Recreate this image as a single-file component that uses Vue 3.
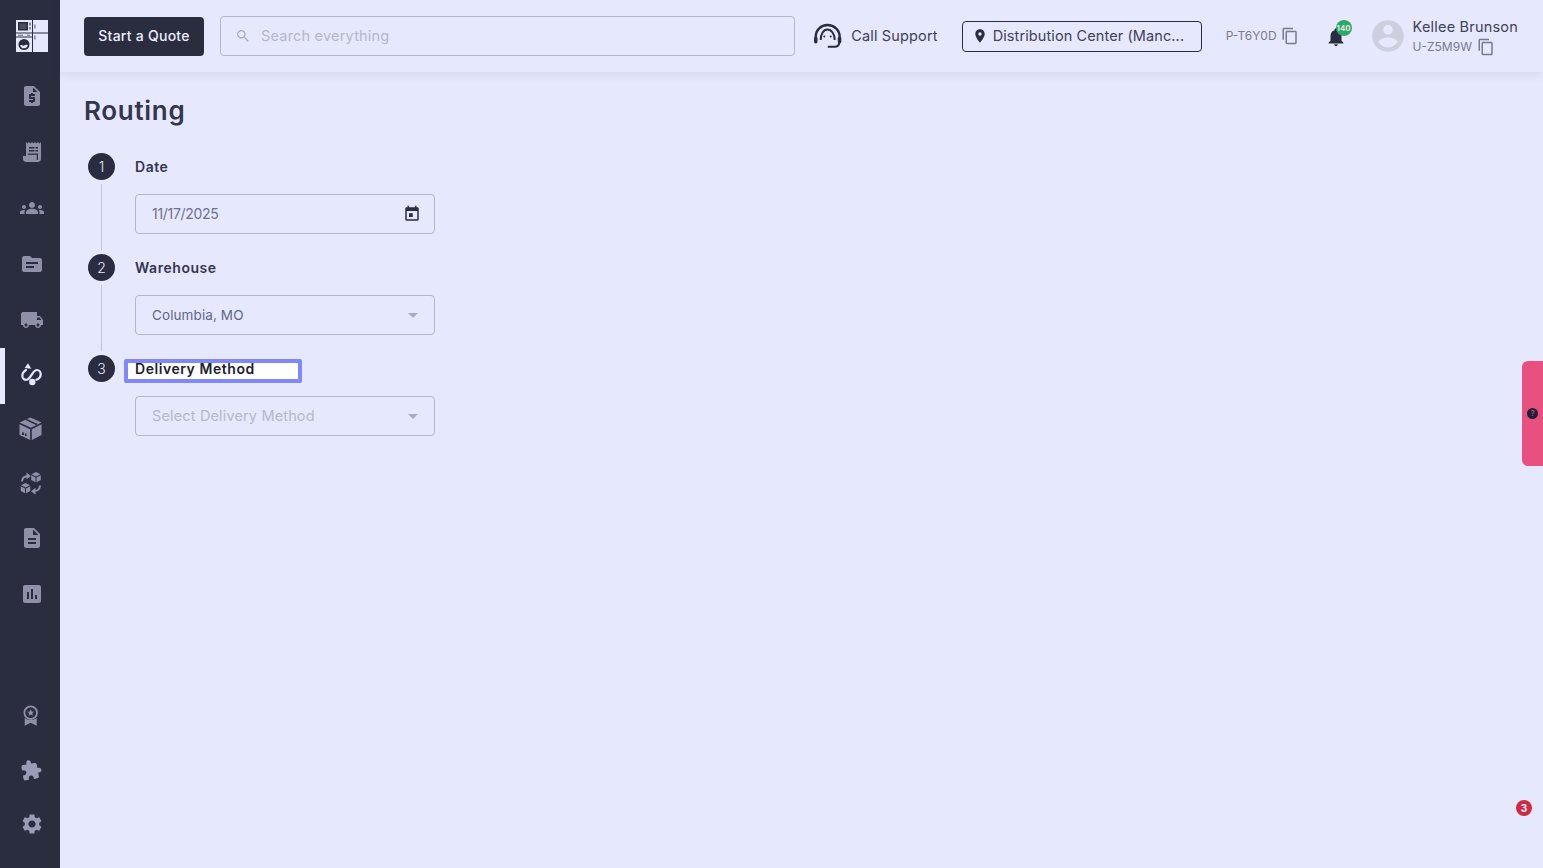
<script setup>
const topNav = [
  { d: 'M14 2H6c-1.1 0-1.99.9-1.99 2L4 20c0 1.1.89 2 1.99 2H18c1.1 0 2-.9 2-2V8l-6-6zm1 10h-4v1h3c.55 0 1 .45 1 1v3c0 .55-.45 1-1 1h-1v1h-2v-1H9v-2h4v-1h-3c-.55 0-1-.45-1-1v-3c0-.55.45-1 1-1h1V9h2v1h2v2zm-2-4V3.5L17.5 8H13z', h: 56 },
  { kind: 'receipt', h: 56 },
  { d: 'M12 12.75c1.63 0 3.07.39 4.24.9 1.08.48 1.76 1.56 1.76 2.73V18H6v-1.61c0-1.18.68-2.26 1.76-2.73 1.17-.52 2.61-.91 4.24-.91zM4 13c1.1 0 2-.9 2-2s-.9-2-2-2-2 .9-2 2 .9 2 2 2zm1.13 1.1c-.37-.06-.74-.1-1.13-.1-.99 0-1.93.21-2.78.58C.48 14.9 0 15.62 0 16.43V18h4.5v-1.61c0-.83.23-1.61.63-2.29zM20 13c1.1 0 2-.9 2-2s-.9-2-2-2-2 .9-2 2 .9 2 2 2zm4 3.43c0-.81-.48-1.53-1.22-1.85-.85-.37-1.79-.58-2.78-.58-.39 0-.76.04-1.13.1.4.68.63 1.46.63 2.29V18H24v-1.57zM12 6c1.66 0 3 1.34 3 3s-1.34 3-3 3-3-1.34-3-3 1.34-3 3-3z', h: 56 },
  { d: 'M20 6h-8l-2-2H4c-1.1 0-1.99.9-1.99 2L2 18c0 1.1.9 2 2 2h16c1.1 0 2-.9 2-2V8c0-1.1-.9-2-2-2zm-6 10H6v-2h8v2zm4-4H6v-2h12v2z', h: 56 },
  { d: 'M20 8h-3V4H3c-1.1 0-2 .9-2 2v11h2c0 1.66 1.34 3 3 3s3-1.34 3-3h6c0 1.66 1.34 3 3 3s3-1.34 3-3h2v-5l-3-4zM6 18.5c-.83 0-1.5-.67-1.5-1.5s.67-1.5 1.5-1.5 1.5.67 1.5 1.5-.67 1.5-1.5 1.5zm13.5-9l1.96 2.5H17V9.5h2.5zm-1.5 9c-.83 0-1.5-.67-1.5-1.5s.67-1.5 1.5-1.5 1.5.67 1.5 1.5-.67 1.5-1.5 1.5z', h: 56 },
  { kind: 'route', active: true, h: 56 },
  { kind: 'box', h: 54 },
  { kind: 'sync', h: 54 },
  { d: 'M14 2H6c-1.1 0-1.99.9-1.99 2L4 20c0 1.1.89 2 1.99 2H18c1.1 0 2-.9 2-2V8l-6-6zm2 16H8v-2h8v2zm0-4H8v-2h8v2zm-3-5V3.5L18.5 9H13z', h: 52 },
  { d: 'M19 3H5c-1.1 0-2 .9-2 2v14c0 1.1.9 2 2 2h14c1.1 0 2-.9 2-2V5c0-1.1-.9-2-2-2zM9 17H7v-7h2v7zm4 0h-2V7h2v10zm4 0h-2v-4h2v4z', h: 60 }
]
const copyPath = 'M16 1H4c-1.1 0-2 .9-2 2v14h2V3h12V1zm3 4H8c-1.1 0-2 .9-2 2v14c0 1.1.9 2 2 2h11c1.1 0 2-.9 2-2V7c0-1.1-.9-2-2-2zm0 16H8V7h11v14z'
</script>

<template>
  <div class="app">
    <aside class="sidebar">
      <div class="logo">
        <svg width="32" height="32" viewBox="0 0 32 32">
          <rect x="0" y="0" width="16" height="12.500" fill="#e6e8fd" />
          <rect x="2" y="2" width="10" height="8.500" fill="#2a2c40" />
          <rect x="3.500" y="3.500" width="7" height="5.500" fill="#4a4c62" />
          <rect x="13.500" y="2.500" width="1" height="3" fill="#2a2c40" />
          <rect x="13.500" y="7" width="1" height="2.500" fill="#2a2c40" />
          <rect x="17" y="0" width="15" height="12.500" fill="#e6e8fd" />
          <rect x="18.300" y="4.500" width="1.200" height="4" fill="#6a6c82" />
          <rect x="17" y="13.500" width="15" height="18.500" fill="#e6e8fd" />
          <rect x="18.300" y="15.500" width="1.200" height="4" fill="#6a6c82" />
          <rect x="0" y="13.500" width="16" height="18.500" fill="#e6e8fd" />
          <rect x="0" y="16.500" width="16" height="1" fill="#2a2c40" />
          <rect x="2" y="14.700" width="5" height="1" fill="#6a6c82" />
          <rect x="11" y="14.700" width="3" height="1" fill="#6a6c82" />
          <circle cx="8" cy="24.500" r="5.500" fill="#2a2c40" />
          <path d="M4.200 25.500c1.500-1.500 2.500.8 3.800 0s2.500-1 3.800-.5a3.900 3.900 0 0 1-7.600.5z" fill="#e6e8fd" />
        </svg>
      </div>
      <nav class="nav">
        <div
          v-for="(item, i) in topNav"
          :key="i"
          class="nav-item"
          :class="{ active: item.active }"
          :style="{ height: item.h + 'px' }"
        >
          <svg v-if="item.d" width="24" height="24" viewBox="0 0 24 24"><path :d="item.d" /></svg>
          <svg v-else-if="item.kind === 'receipt'" width="24" height="24" viewBox="0 0 24 24">
            <path d="M19.500 3.500 18 2l-1.500 1.500L15 2l-1.500 1.500L12 2l-1.500 1.500L9 2 7.500 3.500 6 2v14H3v3c0 1.660 1.340 3 3 3h12c1.660 0 3-1.340 3-3V2l-1.500 1.500z" />
            <path class="cut" d="M9 7h5.500v1.500H9zM15.500 7H18v1.500h-2.500zM9 10h5.500v1.500H9zM15.500 10H18v1.500h-2.500zM8 13.500h10v1.200H8zM16.800 14.700h1.200V20h-1.200z" />
          </svg>
          <svg v-else-if="item.kind === 'route'" class="route" width="24" height="24" viewBox="0 0 24 24">
            <path class="route-line" d="M6 6C3.500 7.500 2.300 9.500 2.300 12c0 3 2.700 4.500 5.200 3.500 2.500-1 3.500-4 5-6 1.300-2 2.500-3.500 4.500-3.500s3.700 2 3.700 4.500c0 2.500-2.200 4.800-4.200 5.200" />
            <path class="route-fill" d="M8-.7 11.300 4.700 4.700 4z" />
            <circle class="route-fill" cx="12.300" cy="18" r="3.200" />
          </svg>
          <svg v-else-if="item.kind === 'box'" class="custom" width="24" height="24" viewBox="0 0 24 24">
            <path d="M10.500-1.500 21.500 3.500 11 8.700-.5 3.500z" />
            <path class="cut" d="M5 .8l11 5.100 1.800-.9L6.800 0z" />
            <path d="M-.5 5.200 10.200 10.200V21L-.5 16z" />
            <path d="M11.800 10.200 21.500 5.200V16L11.800 21z" />
            <path class="cut" d="M2 13.500h2v2.500H2zM5 14.500h1.500v2.500H5z" />
          </svg>
          <svg v-else-if="item.kind === 'sync'" class="custom" width="24" height="24" viewBox="0 0 24 24">
            <g transform="translate(16 4)">
              <path d="M0-5 4.500-2.700 0-.4-4.500-2.700z" />
              <path d="M-4.800-1.700-.5.500V5.200L-4.800 3z" />
              <path d="M.5.500 4.800-1.700V3L.5 5.200z" />
            </g>
            <g transform="translate(5.500 15)">
              <path d="M0-5 4.500-2.700 0-.4-4.500-2.700z" />
              <path d="M-4.800-1.700-.5.500V5.200L-4.800 3z" />
              <path d="M.5.500 4.800-1.700V3L.5 5.200z" />
            </g>
            <path class="arrow" d="M2 8.500C2.200 5.500 4 3.500 7 3.200" />
            <path d="M6.500-.5 11 3 6.500 6.300z" />
            <path class="arrow" d="M20 12.500c-.2 3-2 5.200-5 5.500" />
            <path d="M15.500 14.800 11 18.200l4.500 3.500z" />
          </svg>
        </div>
      </nav>
      <div class="nav-bottom">
        <div class="nav-item bottom">
          <svg class="custom" width="24" height="24" viewBox="0 0 24 24">
            <g transform="translate(.7 1.200)">
              <circle class="ring" cx="10" cy="9.500" r="6.300" />
              <path d="M10 6l1 2.300 2.400.2-1.800 1.600.6 2.400L10 11.200l-2.200 1.300.6-2.400-1.800-1.600 2.400-.2z" />
              <path d="M4 14.500c1.500 1.500 3.800 2.200 6 2.200s4.500-.7 6-2.200V22.500l-6-3-6 3z" />
            </g>
          </svg>
        </div>
        <div class="nav-item bottom">
          <svg class="puzzle" width="22" height="22" viewBox="0 0 24 24">
            <path transform="rotate(-10 12 12) translate(-1 1)" d="M20.500 11H19V7c0-1.100-.9-2-2-2h-4V3.500C13 2.120 11.880 1 10.500 1S8 2.120 8 3.500V5H4c-1.100 0-1.990.9-1.990 2v3.800H3.500c1.490 0 2.700 1.210 2.700 2.700s-1.210 2.700-2.700 2.700H2V20c0 1.100.9 2 2 2h3.800v-1.500c0-1.490 1.210-2.700 2.700-2.700 1.490 0 2.700 1.210 2.700 2.700V22H17c1.100 0 2-.9 2-2v-4h1.500c1.380 0 2.500-1.120 2.500-2.500S21.880 11 20.500 11z" />
          </svg>
        </div>
        <div class="nav-item bottom">
          <svg class="puzzle" width="24" height="24" viewBox="0 0 24 24">
            <path d="M19.140 12.940c.04-.3.06-.61.06-.94 0-.32-.02-.64-.07-.94l2.030-1.580c.18-.14.23-.41.12-.61l-1.920-3.320c-.12-.22-.37-.29-.59-.22l-2.390.96c-.5-.38-1.030-.7-1.620-.94l-.36-2.540c-.04-.24-.24-.41-.48-.41h-3.840c-.24 0-.43.17-.47.41l-.36 2.540c-.59.24-1.130.57-1.620.94l-2.390-.96c-.22-.08-.47 0-.59.22L2.740 8.870c-.12.21-.08.47.12.61l2.030 1.580c-.05.3-.09.63-.09.94s.02.64.07.94l-2.030 1.580c-.18.14-.23.41-.12.61l1.920 3.320c.12.22.37.29.59.22l2.390-.96c.5.38 1.030.7 1.620.94l.36 2.540c.05.24.24.41.48.41h3.840c.24 0 .44-.17.47-.41l.36-2.540c.59-.24 1.130-.56 1.620-.94l2.390.96c.22.08.47 0 .59-.22l1.920-3.320c.12-.22.07-.47-.12-.61l-2.010-1.580zM12 15.600c-1.980 0-3.600-1.620-3.600-3.600s1.620-3.600 3.600-3.600 3.600 1.620 3.600 3.600-1.620 3.600-3.600 3.600z" />
          </svg>
        </div>
      </div>
    </aside>

    <div class="main">
      <header class="header">
        <button class="quote-btn">Start a Quote</button>
        <div class="search">
          <svg class="search-icon" width="16" height="16" viewBox="0 0 24 24">
            <path d="M15.500 14h-.79l-.28-.27C15.410 12.590 16 11.110 16 9.500 16 5.910 13.090 3 9.500 3S3 5.910 3 9.500 5.910 16 9.500 16c1.610 0 3.090-.59 4.230-1.570l.27.28v.79l5 4.990L20.490 19l-4.990-5zm-6 0C7.010 14 5 11.990 5 9.500S7.010 5 9.500 5 14 7.010 14 9.500 11.990 14 9.500 14z" />
          </svg>
          <span class="lift">Search everything</span>
        </div>
        <div class="support">
          <svg width="28" height="26" viewBox="0 0 28 26" fill="none" stroke="#2a2c40">
            <path d="M1.700 14C1.700 7 7 2 13.500 2S25.700 7 25.700 14" stroke-width="2.400" />
            <path d="M6.700 17C6.700 11 9.500 6.500 13.500 6.500S20.700 11 20.700 17" stroke-width="2" />
            <circle cx="10.300" cy="13.500" r="1" fill="#2a2c40" stroke="none" />
            <circle cx="16.700" cy="13.500" r="1" fill="#2a2c40" stroke="none" />
            <rect x="0" y="13.500" width="3.500" height="7" rx="1.700" fill="#2a2c40" stroke="none" />
            <rect x="23.800" y="13.500" width="3.500" height="7" rx="1.700" fill="#2a2c40" stroke="none" />
            <path d="M25.300 20c-.5 2.500-2.300 3.700-4.500 3.700h-7" stroke-width="2" />
          </svg>
          <span class="lift">Call Support</span>
        </div>
        <div class="location">
          <svg width="16" height="16" viewBox="0 0 24 24">
            <path d="M12 2C8.130 2 5 5.130 5 9c0 5.250 7 13 7 13s7-7.750 7-13c0-3.870-3.130-7-7-7zm0 9.500c-1.380 0-2.500-1.120-2.500-2.500s1.120-2.500 2.500-2.500 2.500 1.120 2.500 2.500-1.120 2.500-2.500 2.500z" />
          </svg>
          <span class="lift">Distribution Center (Manc...</span>
        </div>
        <div class="pid">
          <span class="lift">P-T6Y0D</span>
          <svg class="copy" width="18" height="18" viewBox="0 0 24 24"><path :d="copyPath" /></svg>
        </div>
        <div class="bell">
          <svg width="22" height="22" viewBox="0 0 24 24">
            <path d="M12 22c1.100 0 2-.9 2-2h-4c0 1.100.89 2 2 2zm6-6v-5c0-3.070-1.640-5.640-4.500-6.320V4c0-.83-.67-1.500-1.500-1.500s-1.500.67-1.500 1.500v.68C7.630 5.360 6 7.920 6 11v5l-2 2v1h16v-1l-2-2z" />
          </svg>
          <span class="bell-badge">140</span>
        </div>
        <div class="user">
          <svg width="38" height="38" viewBox="0 0 24 24">
            <path d="M12 2C6.480 2 2 6.480 2 12s4.480 10 10 10 10-4.480 10-10S17.520 2 12 2zm0 3c1.660 0 3 1.340 3 3s-1.340 3-3 3-3-1.340-3-3 1.340-3 3-3zm0 14.200c-2.500 0-4.710-1.280-6-3.220.03-1.990 4-3.080 6-3.080 1.990 0 5.970 1.090 6 3.080-1.290 1.940-3.500 3.220-6 3.220z" />
          </svg>
          <div class="user-text">
            <div class="user-name">Kellee Brunson</div>
            <div class="user-id">
              <span>U-Z5M9W</span>
              <svg class="copy" width="18" height="18" viewBox="0 0 24 24"><path :d="copyPath" /></svg>
            </div>
          </div>
        </div>
      </header>

      <main class="content">
        <h1 class="title">Routing</h1>
        <section class="stepper">
          <div class="step">
            <div class="step-head">
              <span class="num">1</span>
              <span class="label">Date</span>
            </div>
            <div class="step-body line">
              <div class="field">
                <span class="date-value lift">11/17/2025</span>
                <svg width="18" height="18" viewBox="0 0 24 24">
                  <path d="M16 1v2H8V1H6v2H5c-1.110 0-1.990.9-1.990 2L3 19c0 1.100.89 2 2 2h14c1.100 0 2-.9 2-2V5c0-1.100-.9-2-2-2h-1V1h-2zm3 18H5V8h14v11z" />
                  <rect x="8" y="11" width="5" height="5" />
                </svg>
              </div>
            </div>
          </div>
          <div class="step">
            <div class="step-head">
              <span class="num">2</span>
              <span class="label">Warehouse</span>
            </div>
            <div class="step-body line">
              <div class="field">
                <span class="select-value">Columbia, MO</span>
                <span class="caret"></span>
              </div>
            </div>
          </div>
          <div class="step">
            <div class="step-head">
              <span class="num">3</span>
              <span class="label focused">Delivery Method</span>
            </div>
            <div class="step-body">
              <div class="field">
                <span class="placeholder lift">Select Delivery Method</span>
                <span class="caret"></span>
              </div>
            </div>
          </div>
        </section>
      </main>
    </div>

    <div class="side-tab"><span class="side-dot">?</span></div>
    <span class="red-badge">3</span>
  </div>
</template>

<style>
html, body { margin: 0; background: #e6e8fd; }
</style>

<style scoped>
.app {
  display: flex;
  height: 868px;
  overflow: hidden;
  position: relative;
  background: #e6e8fd;
  font-family: Inter, "Noto Sans", sans-serif;
  color: #2a2c40;
}
.lift { padding-bottom: 2px; }
.sidebar {
  width: 60px;
  flex: none;
  background: #2a2c40;
  display: flex;
  flex-direction: column;
  padding-bottom: 16.500px;
  box-sizing: border-box;
}
.logo {
  height: 68px;
  padding: 20px 0 0 16px;
  box-sizing: border-box;
}
.logo svg { display: block; }
.nav { display: flex; flex-direction: column; }
.nav-bottom { margin-top: auto; display: flex; flex-direction: column; }
.nav-item {
  display: flex;
  align-items: center;
  justify-content: center;
  padding-left: 4px;
  box-sizing: border-box;
  position: relative;
}
.nav-item.bottom { height: 55px; }
.nav-item svg { fill: #8f90a8; overflow: visible; display: block; }
.nav-item svg.puzzle { fill: #9a9cb6; }
.nav-item .cut { fill: #2a2c40; }
.nav-item.active::before {
  content: "";
  position: absolute;
  left: 0;
  top: 0;
  bottom: 0;
  width: 5px;
  background: #e6e8fd;
}
.route .route-line { fill: none; stroke: #e6e8fd; stroke-width: 2.2; stroke-linecap: round; }
.route .route-fill { fill: #e6e8fd; }
.custom .ring { fill: none; stroke: #8f90a8; stroke-width: 1.8; }
.custom .arrow { fill: none; stroke: #8f90a8; stroke-width: 2; }

.main { flex: 1; min-width: 0; display: flex; flex-direction: column; }
.header {
  height: 72px;
  flex: none;
  display: flex;
  align-items: center;
  padding: 0 25px 0 24px;
  box-sizing: border-box;
  box-shadow: 0 2px 10px rgba(42, 44, 64, 0.09);
  background: #e6e8fd;
}
.quote-btn {
  width: 120px;
  height: 39px;
  border: 0;
  border-radius: 4px;
  background: #2a2c40;
  color: #eceefd;
  font: 500 14px Inter, sans-serif;
  letter-spacing: 0.25px;
  padding: 0 0 2px;
  flex: none;
}
.search {
  flex: 1;
  height: 40px;
  margin-left: 16px;
  border: 1px solid #b4b6d0;
  border-radius: 4px;
  box-sizing: border-box;
  display: flex;
  align-items: center;
  padding-left: 14px;
  gap: 10px;
  font-size: 14.500px;
  color: #b5b7cf;
  letter-spacing: 0.2px;
}
.search-icon { fill: #a9abc4; }
.support {
  margin-left: 19px;
  display: flex;
  align-items: center;
  gap: 9px;
  font-size: 14.500px;
  color: #3f4158;
  letter-spacing: 0.15px;
  flex: none;
}
.location {
  margin-left: 24px;
  width: 240px;
  height: 31px;
  box-sizing: border-box;
  border: 1px solid #2a2c40;
  border-radius: 4px;
  display: flex;
  align-items: center;
  padding-left: 9px;
  gap: 5px;
  font-size: 14.500px;
  color: #3f4158;
  white-space: nowrap;
  flex: none;
  letter-spacing: 0.1px;
}
.location svg { fill: #2a2c40; flex: none; }
.pid {
  margin-left: 24px;
  display: flex;
  align-items: center;
  gap: 4px;
  font-size: 12px;
  color: #787a92;
  flex: none;
}
.copy { fill: #787a92; flex: none; }
.bell {
  margin-left: 26px;
  margin-top: 2px;
  position: relative;
  width: 22px;
  height: 22px;
  flex: none;
}
.bell svg { fill: #2a2c40; display: block; }
.bell-badge {
  position: absolute;
  left: 11px;
  top: -6px;
  width: 16px;
  height: 16px;
  border-radius: 50%;
  background: #2ea866;
  color: #e6f4ee;
  font-size: 8px;
  font-weight: 600;
  line-height: 16px;
  text-align: center;
}
.user {
  margin-left: 22px;
  display: flex;
  align-items: center;
  gap: 6px;
  flex: none;
}
.user > svg { fill: #cdcfe0; flex: none; }
.user-text { display: flex; flex-direction: column; }
.user-name { font-size: 14.500px; line-height: 20px; color: #3f4158; letter-spacing: 0.2px; }
.user-id {
  display: flex;
  align-items: center;
  gap: 5px;
  margin-top: 1px;
  font-size: 12px;
  line-height: 18px;
  color: #787a92;
}

.content { padding: 0 24px; }
.title {
  margin: 24px 0 0;
  font-size: 26px;
  line-height: 30px;
  font-weight: 600;
  color: #34364f;
  letter-spacing: 0.7px;
}
.stepper { margin: 27px 0 0 4px; }
.step-head {
  display: flex;
  align-items: center;
  height: 27px;
}
.num {
  width: 27px;
  height: 27px;
  border-radius: 50%;
  background: #2a2c40;
  color: #e6e8fd;
  font-size: 14px;
  font-weight: 300;
  display: flex;
  align-items: center;
  justify-content: center;
  flex: none;
}
.label {
  margin-left: 20px;
  font-size: 14px;
  font-weight: 600;
  color: #34364f;
  letter-spacing: 0.55px;
}
.label.focused {
  margin-left: 9px;
  margin-top: 5px;
  width: 178px;
  height: 24px;
  box-sizing: border-box;
  border: 4px solid #8088fb;
  border-radius: 2px;
  background: #fff;
  padding-left: 7px;
  line-height: 11px;
  color: #20212e;
  white-space: nowrap;
}
.step-body {
  margin-left: 13px;
  padding: 14px 0 20px 34px;
  height: 74px;
  box-sizing: border-box;
  position: relative;
}
.step-body.line::before {
  content: "";
  position: absolute;
  left: 0;
  top: 4px;
  bottom: 4px;
  width: 1px;
  background: #c3c5dc;
}
.field {
  width: 300px;
  height: 40px;
  box-sizing: border-box;
  border: 1px solid #b4b6d0;
  border-radius: 4px;
  padding: 0 13px 0 16px;
  display: flex;
  align-items: center;
  justify-content: space-between;
}
.field svg { fill: #2a2c40; }
.date-value { font-size: 14px; color: #6d7090; letter-spacing: -0.3px; }
.select-value { font-size: 13.500px; color: #5f678c; letter-spacing: 0.1px; }
.placeholder { font-size: 14.500px; color: #b5b7cf; letter-spacing: 0.15px; }
.caret {
  width: 0;
  height: 0;
  margin-right: 3px;
  border-left: 5px solid transparent;
  border-right: 5px solid transparent;
  border-top: 5px solid #a9abc4;
}
.side-tab {
  position: absolute;
  right: 0;
  top: 361px;
  width: 21px;
  height: 105px;
  background: #e8507f;
  border-radius: 6px 0 0 6px;
  display: flex;
  align-items: center;
  justify-content: center;
}
.side-dot {
  width: 11px;
  height: 11px;
  border-radius: 50%;
  background: #1f2138;
  color: #e8507f;
  font-size: 8px;
  line-height: 11px;
  text-align: center;
}
.red-badge {
  position: absolute;
  left: 1516px;
  top: 800px;
  width: 16px;
  height: 16px;
  border-radius: 50%;
  background: #cf2a45;
  color: #fff;
  font-size: 10px;
  font-weight: 700;
  line-height: 16px;
  text-align: center;
}
</style>
